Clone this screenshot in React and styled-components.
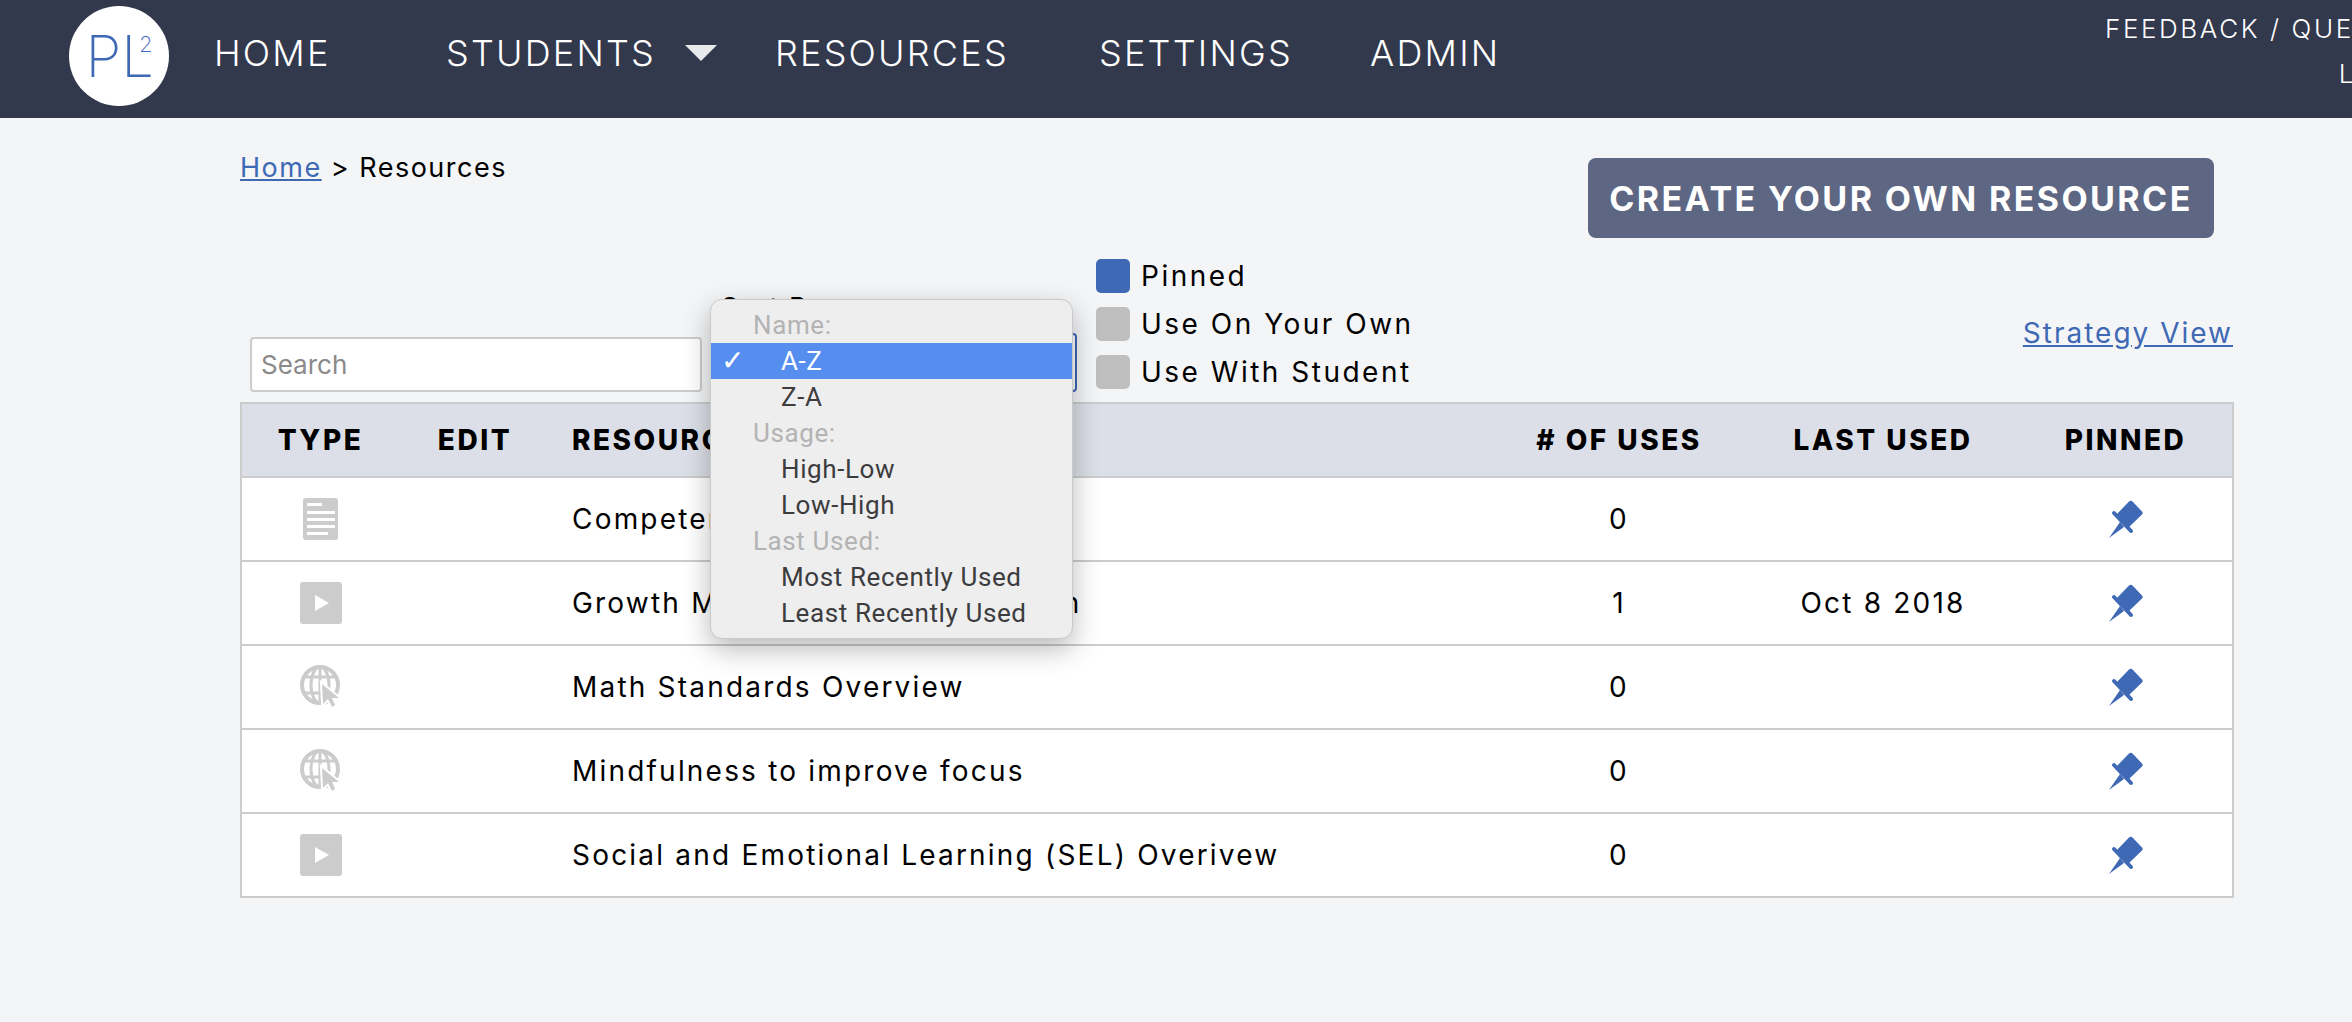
import styled, { createGlobalStyle } from 'styled-components'

const rows = [
  { kind: 'doc', name: 'Competency-Based Education', uses: 0, last: '' },
  { kind: 'video', name: 'Growth Mindset Film Introduction', uses: 1, last: 'Oct 8 2018' },
  { kind: 'web', name: 'Math Standards Overview', uses: 0, last: '' },
  { kind: 'web', name: 'Mindfulness to improve focus', uses: 0, last: '' },
  { kind: 'video', name: 'Social and Emotional Learning (SEL) Overivew', uses: 0, last: '' },
]

const sortGroups = [
  { label: 'Name:', items: ['A-Z', 'Z-A'] },
  { label: 'Usage:', items: ['High-Low', 'Low-High'] },
  { label: 'Last Used:', items: ['Most Recently Used', 'Least Recently Used'] },
]

function DocIcon() {
  return (
    <svg width="35" height="42" viewBox="0 0 35 42">
      <rect width="35" height="42" rx="3" fill="#cccccc" />
      <g fill="#fff">
        <rect x="4" y="5" width="15" height="3" />
        <rect x="4" y="13" width="28" height="3" />
        <rect x="4" y="20" width="28" height="3" />
        <rect x="4" y="27" width="28" height="3" />
        <rect x="4" y="34" width="21" height="3" />
      </g>
    </svg>
  )
}

function VideoIcon() {
  return (
    <svg width="42" height="42" viewBox="0 0 42 42">
      <rect width="42" height="42" rx="3" fill="#cccccc" />
      <path d="M15 13 L29 21 L15 29 Z" fill="#fff" />
    </svg>
  )
}

function WebIcon() {
  return (
    <svg width="42" height="44" viewBox="0 0 42 44">
      <g fill="none" stroke="#cccccc" strokeWidth="3">
        <circle cx="20" cy="20" r="18" strokeWidth="4" />
        <ellipse cx="20" cy="20" rx="9" ry="18" />
        <path d="M20 2 V38 M4 12 H36 M4 28 H36" />
      </g>
      <path d="M22 19 L23 39 L28 34 L32 42 L35 40 L32 33 L39 33 Z" fill="#cccccc" stroke="#fff" strokeWidth="4" paintOrder="stroke" />
    </svg>
  )
}

function PinIcon() {
  return (
    <svg width="34" height="38" viewBox="0 0 34 38">
      <path d="M11 22 L15 27 L0 38 Z" fill="#3f68b5" />
      <path d="M5 13 L22 31" stroke="#3f68b5" strokeWidth="4" strokeLinecap="round" />
      <path d="M20 1.5 Q22 0 23.5 1.5 L33 11.5 Q34.5 13 33 14.5 L20 27 L8 14 Z" fill="#3f68b5" />
    </svg>
  )
}

const typeIcons = { doc: DocIcon, video: VideoIcon, web: WebIcon }

function App() {
  return (
    <Page>
      <GlobalStyle />
      <NavBar>
        <Logo>PL<sup>2</sup></Logo>
        <NavItem $w={232}>HOME</NavItem>
        <NavItem $w={329}>STUDENTS<Caret /></NavItem>
        <NavItem $w={324}>RESOURCES</NavItem>
        <NavItem $w={271}>SETTINGS</NavItem>
        <NavItem $w={135}>ADMIN</NavItem>
        <NavSide>
          <span>FEEDBACK / QUESTIONS?</span>
          <span>LOGOUT</span>
        </NavSide>
      </NavBar>
      <Main>
        <TopRow>
          <Breadcrumb><TextLink>Home</TextLink> &gt; Resources</Breadcrumb>
          <CreateButton>CREATE YOUR OWN RESOURCE</CreateButton>
        </TopRow>
        <FilterRow>
          <SearchInput placeholder="Search" readOnly />
          <SortBox>
            <SortLabel>Sort By:</SortLabel>
            <SortSelect />
            <SortMenu>
              {sortGroups.map((group) => (
                <div key={group.label}>
                  <MenuHeading>{group.label}</MenuHeading>
                  {group.items.map((item) => (
                    <MenuItem key={item} $active={item === 'A-Z'}>
                      {item === 'A-Z' && <Check>✓</Check>}
                      {item}
                    </MenuItem>
                  ))}
                </div>
              ))}
            </SortMenu>
          </SortBox>
          <Legend>
            <LegendRow><Swatch $on />Pinned</LegendRow>
            <LegendRow><Swatch />Use On Your Own</LegendRow>
            <LegendRow><Swatch />Use With Student</LegendRow>
          </Legend>
          <StrategyLink>Strategy View</StrategyLink>
        </FilterRow>
        <Table>
          <colgroup>
            <col width="158" />
            <col width="152" />
            <col width="940" />
            <col width="256" />
            <col width="272" />
            <col width="214" />
          </colgroup>
          <thead>
            <tr>
              <Th>TYPE</Th>
              <Th>EDIT</Th>
              <Th $left>RESOURCE NAME</Th>
              <Th># OF USES</Th>
              <Th>LAST USED</Th>
              <Th>PINNED</Th>
            </tr>
          </thead>
          <tbody>
            {rows.map((row) => {
              const Icon = typeIcons[row.kind]
              return (
                <tr key={row.name}>
                  <Td><IconWrap><Icon /></IconWrap></Td>
                  <Td />
                  <Td $left>{row.name}</Td>
                  <Td>{row.uses}</Td>
                  <Td>{row.last}</Td>
                  <Td><IconWrap><PinIcon /></IconWrap></Td>
                </tr>
              )
            })}
          </tbody>
        </Table>
      </Main>
    </Page>
  )
}

export default App

const GlobalStyle = createGlobalStyle`
  html, body {
    margin: 0;
    background: #f4f5f7;
  }
  * {
    box-sizing: border-box;
  }
`

const Page = styled.div`
  width: 2352px;
  height: 1022px;
  overflow: hidden;
  background: #f4f5f7;
  color: #000;
  font-family: Inter, "Liberation Sans", sans-serif;
`

const NavBar = styled.header`
  display: flex;
  align-items: center;
  height: 118px;
  padding: 0 0 6px 69px;
  background: #33394d;
  color: #fff;
`

const Logo = styled.div`
  flex: none;
  display: flex;
  justify-content: center;
  width: 100px;
  height: 100px;
  margin-right: 45px;
  padding-top: 23px;
  border-radius: 50%;
  background: #fff;
  color: #3f68b5;
  font-size: 58px;
  font-weight: 200;
  line-height: 54px;

  sup {
    font-size: 22px;
    line-height: 22px;
    margin: 4px 0 0 -15px;
  }
`

const NavItem = styled.div`
  flex: none;
  display: flex;
  align-items: center;
  width: ${(p) => p.$w}px;
  margin-bottom: 6px;
  font-size: 36px;
  font-weight: 300;
  letter-spacing: 2.2px;
`

const Caret = styled.span`
  width: 0;
  height: 0;
  margin-left: 29px;
  border-left: 16px solid transparent;
  border-right: 16px solid transparent;
  border-top: 16px solid #e8e9eb;
`

const NavSide = styled.div`
  flex: none;
  display: flex;
  flex-direction: column;
  align-items: flex-end;
  gap: 14px;
  margin: 0 0 11px 600px;
  font-size: 26px;
  font-weight: 300;
  letter-spacing: 2.6px;
  white-space: nowrap;

  span:last-child {
    margin-right: 18px;
  }
`

const Main = styled.main`
  width: 1993px;
  margin-left: 240px;
`

const TopRow = styled.div`
  display: flex;
  justify-content: space-between;
  align-items: flex-start;
  height: 140px;
  padding-right: 19px;
`

const Breadcrumb = styled.div`
  padding-top: 33px;
  font-size: 27px;
  letter-spacing: 1.5px;
`

const TextLink = styled.a`
  color: #3f68b5;
  text-decoration: underline;
`

const CreateButton = styled.button`
  width: 626px;
  height: 80px;
  margin-top: 40px;
  padding: 0;
  border: 0;
  border-radius: 8px;
  background: #5d6783;
  color: #fff;
  font-family: inherit;
  font-size: 34px;
  font-weight: 700;
  letter-spacing: 2.4px;
`

const FilterRow = styled.div`
  display: flex;
  align-items: flex-end;
  height: 144px;
  padding: 0 0 10px 10px;
`

const SearchInput = styled.input`
  width: 452px;
  height: 55px;
  padding: 0 9px;
  border: 2px solid #cccccc;
  border-radius: 4px;
  background: #fff;
  font-family: inherit;
  font-size: 26px;

  &::placeholder {
    color: #8a8a8a;
  }
`

const SortBox = styled.div`
  position: relative;
  flex: none;
  width: 375px;
  height: 55px;
  margin-right: 19px;
`

const SortLabel = styled.div`
  position: absolute;
  left: 19px;
  top: -46px;
  font-size: 27px;
  letter-spacing: 1.5px;
`

const SortSelect = styled.div`
  height: 59px;
  margin: -4px 0 0 14px;
  border: 2px solid #3f68b5;
  border-radius: 4px;
  background: #fff;
`

const SortMenu = styled.div`
  position: absolute;
  left: 8px;
  top: -38px;
  width: 363px;
  height: 340px;
  padding-top: 7px;
  border: 1px solid #c9c9c9;
  border-radius: 12px;
  background: #eeeeef;
  box-shadow: 0 10px 28px rgba(0, 0, 0, 0.28);
  font-family: Roboto, "Liberation Sans", sans-serif;
  font-size: 26px;
  letter-spacing: 0.6px;
`

const MenuHeading = styled.div`
  height: 36px;
  padding-left: 42px;
  color: #b3b3b3;
  line-height: 36px;
`

const MenuItem = styled.div`
  position: relative;
  height: 36px;
  padding-left: 70px;
  background: ${(p) => (p.$active ? '#568ef0' : 'transparent')};
  color: ${(p) => (p.$active ? '#fff' : '#3c3c3e')};
  line-height: 36px;
`

const Check = styled.span`
  position: absolute;
  left: 10px;
  font-size: 28px;
`

const Legend = styled.div`
  flex: none;
  display: flex;
  flex-direction: column;
  gap: 14px;
  margin-bottom: 3px;
`

const LegendRow = styled.div`
  display: flex;
  align-items: center;
  gap: 11px;
  height: 34px;
  font-size: 28px;
  letter-spacing: 2.5px;
`

const Swatch = styled.span`
  width: 34px;
  height: 34px;
  border-radius: 5px;
  background: ${(p) => (p.$on ? '#3f68b5' : '#bfbfbf')};
`

const StrategyLink = styled(TextLink)`
  margin: 0 0 42px auto;
  font-size: 28px;
  letter-spacing: 2px;
  white-space: nowrap;
`

const Table = styled.table`
  width: 1992px;
  table-layout: fixed;
  border-collapse: collapse;
  border: 2px solid #cccccc;
  background: #fff;
`

const Th = styled.th`
  height: 74px;
  padding: 0 0 0 ${(p) => (p.$left ? '21px' : '0')};
  border-bottom: 2px solid #cccccc;
  background: #dcdfe7;
  font-size: 28px;
  font-weight: 800;
  letter-spacing: 2.5px;
  text-align: ${(p) => (p.$left ? 'left' : 'center')};
`

const Td = styled.td`
  height: 84px;
  padding: 0 0 0 ${(p) => (p.$left ? '21px' : '0')};
  border-bottom: 2px solid #cccccc;
  font-size: 28px;
  letter-spacing: 2.2px;
  text-align: ${(p) => (p.$left ? 'left' : 'center')};
`

const IconWrap = styled.div`
  display: flex;
  justify-content: center;
`
